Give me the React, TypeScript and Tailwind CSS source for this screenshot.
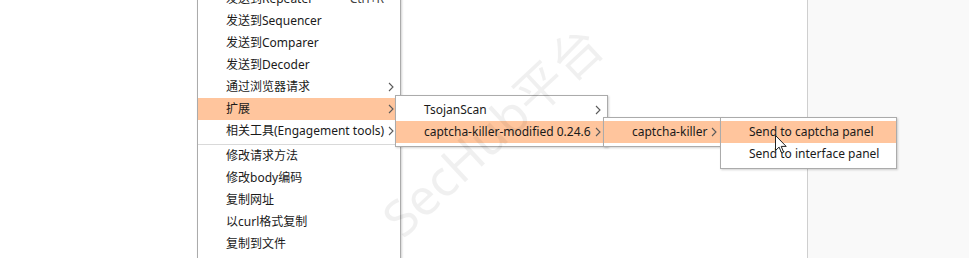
import React from 'react';

type Entry = { label?: string; shortcut?: string; sub?: boolean; active?: boolean; sep?: boolean };

const font = { fontFamily: '"Noto Sans", "Noto Sans CJK SC", sans-serif' };

const Chevron = () => (
    <svg width="6" height="10" viewBox="0 0 6 10" className="shrink-0">
        <path d="M1 1l4 4-4 4" fill="none" stroke="#5a5a5a" strokeWidth="1.1" />
    </svg>
);

const MenuRow = ({ item, arrowSlot }: { item: Entry; arrowSlot: boolean }) => {
    if (item.sep) {
        return (
            <div className="h-[3px] pt-[2px]">
                <div className="h-px bg-[#d9d9d9]" />
            </div>
        );
    }
    return (
        <div className={`flex items-center h-[22px] pl-[28px] pr-[6px] whitespace-nowrap ${item.active ? 'bg-[#ffc59d]' : ''}`}>
            <span className="flex-1">{item.label}</span>
            {item.shortcut && <span className="text-[#444]">{item.shortcut}</span>}
            {arrowSlot && <span className="w-[6px] ml-[4px] flex items-center">{item.sub && <Chevron />}</span>}
        </div>
    );
};

const Menu = ({ items, className }: { items: Entry[]; className: string }) => (
    <div
        className={`absolute bg-white border border-[#ababab] text-[12px] text-[#1a1a1a] shadow-[1px_1px_2px_rgba(0,0,0,0.18)] ${className}`}
        style={font}
    >
        {items.map((it, i) => (
            <MenuRow key={i} item={it} arrowSlot={items.some((x) => x.sub)} />
        ))}
    </div>
);

const mainItems: Entry[] = [
    { label: '发送到Repeater', shortcut: 'Ctrl+R' },
    { label: '发送到Sequencer' },
    { label: '发送到Comparer' },
    { label: '发送到Decoder' },
    { label: '通过浏览器请求', sub: true },
    { label: '扩展', sub: true, active: true },
    { label: '相关工具(Engagement tools)', sub: true },
    { sep: true },
    { label: '修改请求方法' },
    { label: '修改body编码' },
    { label: '复制网址' },
    { label: '以curl格式复制' },
    { label: '复制到文件' },
];

export default function App() {
    return (
        <div className="relative w-[969px] h-[258px] overflow-hidden flex bg-white">
            <div className="w-[808px] h-full bg-white border-r border-[#cfcfcf]" />
            <div className="flex-1 h-full bg-[#f9f9f9]" />

            <Menu items={mainItems} className="left-[197px] top-[-14px] w-[204px] h-[300px] py-[1px]" />
            <Menu
                items={[
                    { label: 'TsojanScan', sub: true },
                    { label: 'captcha-killer-modified 0.24.6', sub: true, active: true },
                ]}
                className="left-[395px] top-[95px] w-[213px] py-[3px]"
            />
            <Menu
                items={[{ label: 'captcha-killer', sub: true, active: true }]}
                className="left-[603px] top-[117px] w-[120px] py-[3px]"
            />
            <Menu
                items={[{ label: 'Send to captcha panel', active: true }, { label: 'Send to interface panel' }]}
                className="left-[720px] top-[117px] w-[177px] py-[3px]"
            />

            {/* watermark */}
            <div
                className="absolute left-[312px] top-[106px] w-[360px] text-center text-[50px] leading-none text-black/[0.06] -rotate-[43deg] pointer-events-none whitespace-nowrap"
                style={font}
            >
                SecHub平台
            </div>

            {/* mouse cursor */}
            <svg width="12" height="19" viewBox="0 0 12 19" className="absolute left-[775px] top-[135px]">
                <path d="M0.5 0.5v15l3.6-3.4 2.6 6 2-0.9-2.5-5.8h5z" fill="white" stroke="#222" strokeWidth="1" />
            </svg>
        </div>
    );
}
